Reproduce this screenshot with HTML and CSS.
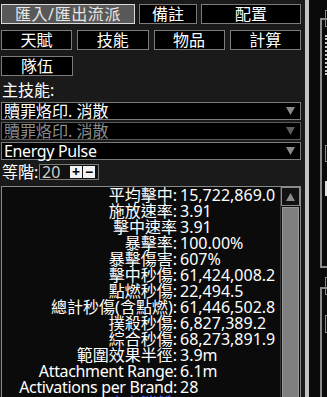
FILE: index.html
```html
<!DOCTYPE html>
<html lang="zh-Hant">
<head>
  <meta charset="UTF-8" />
  <meta name="viewport" content="width=device-width, initial-scale=1.0" />
  <title>Calc</title>
  <link rel="stylesheet" href="styles.css">
</head>
<body>
  <div class="layout">
    <div class="left-panel">
      <div class="tab-row">
        <button class="tab selected w-import">匯入/匯出流派</button>
        <button class="tab w-notes">備註</button>
        <button class="tab w-config">配置</button>
      </div>
      <div class="tab-row wide-gap">
        <button class="tab w-quarter">天賦</button>
        <button class="tab w-quarter">技能</button>
        <button class="tab w-quarter">物品</button>
        <button class="tab w-quarter">計算</button>
      </div>
      <div class="tab-row">
        <button class="tab w-quarter">隊伍</button>
      </div>

      <div class="field-label">主技能:</div>
      <div class="select">
        <span>贖罪烙印. 消散</span>
        <svg class="arrow" width="9" height="8" viewBox="0 0 9 8"><path d="M0 0H9L4.5 8Z" fill="#8a8a8a"/></svg>
      </div>
      <div class="select dim">
        <span>贖罪烙印. 消散</span>
        <svg class="arrow" width="9" height="8" viewBox="0 0 9 8"><path d="M0 0H9L4.5 8Z" fill="#5e5e5e"/></svg>
      </div>
      <div class="select">
        <span class="latin">Energy Pulse</span>
        <svg class="arrow" width="9" height="8" viewBox="0 0 9 8"><path d="M0 0H9L4.5 8Z" fill="#8a8a8a"/></svg>
      </div>

      <div class="level-row">
        <div class="level-label">等階:</div>
        <div class="level-box">
          <div class="level-value">20</div>
          <div class="step-btn">+</div>
          <div class="step-btn">−</div>
        </div>
      </div>

      <div class="stats-box">
        <div class="stats">
          <span class="k">平均擊中:</span><span class="v">15,722,869.0</span>
          <span class="k">施放速率:</span><span class="v">3.91</span>
          <span class="k">擊中速率</span><span class="v">3.91</span>
          <span class="k">暴擊率:</span><span class="v">100.00%</span>
          <span class="k">暴擊傷害:</span><span class="v">607%</span>
          <span class="k">擊中秒傷:</span><span class="v">61,424,008.2</span>
          <span class="k">點燃秒傷:</span><span class="v">22,494.5</span>
          <span class="k">總計秒傷(含點燃):</span><span class="v">61,446,502.8</span>
          <span class="k">撲殺秒傷:</span><span class="v">6,827,389.2</span>
          <span class="k">綜合秒傷:</span><span class="v">68,273,891.9</span>
          <span class="k">範圍效果半徑:</span><span class="v">3.9m</span>
          <span class="k latin">Attachment Range:</span><span class="v">6.1m</span>
          <span class="k latin">Activations per Brand:</span><span class="v">28</span>
          <span class="k blue">魔力消耗:</span><span class="v red">30</span>
        </div>
        <div class="scrollbar">
          <div class="scroll-up">
            <svg width="9" height="8" viewBox="0 0 9 8"><path d="M0 8H9L4.5 0Z" fill="#8a8a8a"/></svg>
          </div>
          <div class="scroll-thumb"></div>
        </div>
      </div>
    </div>

    <div class="divider"></div>

    <div class="right-panel">
      <div class="side-group first">
        <div class="side-box b1"></div>
        <div class="side-dots"></div>
        <div class="side-box b2"></div>
        <div class="side-box b3 filled"></div>
      </div>
      <div class="side-group second">
        <div class="side-box b4"></div>
        <div class="side-box b5"></div>
      </div>
    </div>
  </div>
</body>
</html>
```

FILE: styles.css
```css
html, body {
  margin: 0;
  padding: 0;
  width: 100vw;
  height: 100vh;
  overflow: hidden;
  background: #1a1a1a;
  color: #fff;
  font-family: "Noto Sans", "Noto Sans CJK TC", sans-serif;
  font-size: 16px;
}

.layout {
  display: flex;
  height: 100vh;
}

.left-panel {
  width: 305px;
  flex-shrink: 0;
  padding: 4px 4px 0 1px;
  box-sizing: border-box;
  display: flex;
  flex-direction: column;
}

.tab-row {
  display: flex;
  gap: 4px;
  margin-bottom: 6px;
}

.tab-row.wide-gap {
  gap: 5px;
}

.tab {
  height: 20px;
  padding: 0;
  margin: 0;
  background: #000;
  border: 1px solid #7c7c7c;
  color: #fff;
  font-family: inherit;
  font-size: 16px;
  line-height: 18px;
  text-align: center;
  cursor: pointer;
}

.tab.selected {
  background: #585858;
  border-color: #d8d8d8;
  color: #e6e6e6;
  letter-spacing: 0.6px;
}

.w-import { width: 134px; }
.w-notes { width: 58px; }
.w-config { width: 100px; }
.w-quarter { width: 72px; }

.field-label {
  height: 20px;
  line-height: 20px;
  margin-top: -2px;
  margin-bottom: 2px;
  padding-left: 1px;
}

.select {
  width: 300px;
  height: 18px;
  box-sizing: border-box;
  border: 1px solid #7c7c7c;
  background: #000;
  display: flex;
  align-items: center;
  justify-content: space-between;
  padding: 0 5px 0 2px;
  margin-bottom: 2px;
  line-height: 16px;
}

.select.dim {
  border-color: #5a5a5a;
  color: #8c8c8c;
}

.latin {
  letter-spacing: -0.35px;
}

.level-row {
  display: grid;
  grid-template-columns: 38px 60px;
  align-items: center;
  height: 20px;
  margin-bottom: 4px;
}

.level-label {
  padding-left: 1px;
  line-height: 20px;
}

.level-box {
  height: 16px;
  box-sizing: border-box;
  border: 1px solid #7c7c7c;
  background: #111;
  display: grid;
  grid-template-columns: 27px 12px 12px;
  column-gap: 1px;
  align-items: center;
  padding-left: 2px;
}

.level-value {
  color: #cfcfcf;
  line-height: 14px;
}

.step-btn {
  height: 12px;
  background: #f2f2f2;
  color: #000;
  font-weight: bold;
  font-size: 14px;
  line-height: 12px;
  text-align: center;
}

.stats-box {
  width: 300px;
  flex: 1;
  box-sizing: border-box;
  border: 1px solid #8a8a8a;
  border-bottom: none;
  background: #0b0b0b;
  display: flex;
  overflow: hidden;
}

.stats {
  flex: 1;
  display: grid;
  grid-template-columns: 174px 1fr;
  column-gap: 3px;
  align-content: start;
  line-height: 16px;
  padding-left: 1px;
  white-space: nowrap;
}

.stats .k {
  text-align: right;
}

.stats .blue { color: #4a4aff; }
.stats .red { color: #ff3b3b; }

.scrollbar {
  width: 19px;
  border-left: 1px solid #3a3a3a;
  display: flex;
  flex-direction: column;
}

.scroll-up {
  height: 17px;
  border: 1px solid #8a8a8a;
  background: #111;
  display: flex;
  align-items: center;
  justify-content: center;
}

.scroll-thumb {
  flex: 1;
  margin: 1px 1px 0 1px;
  border: 1px solid #9a9a9a;
  border-bottom: none;
  background: #7f7f7f;
}

.divider {
  width: 4px;
  flex-shrink: 0;
  background: #c4c4c4;
}

.right-panel {
  flex: 1;
  background: #0a0a0a;
  padding-left: 11px;
  overflow: hidden;
}

.side-group {
  border-left: 2px solid #8a8a8a;
  border-top: 2px solid #8a8a8a;
  border-bottom: 2px solid #8a8a8a;
  padding-left: 3px;
  box-sizing: border-box;
}

.side-group.first {
  margin-top: 18px;
  height: 250px;
}

.side-group.second {
  margin-top: 19px;
  height: 200px;
}

.side-box {
  width: 20px;
  border: 1px solid #8a8a8a;
  box-sizing: border-box;
}

.side-box.b1 { height: 17px; margin-top: -10px; }
.side-box.b2 { height: 17px; margin-top: 70px; }
.side-box.b3 { height: 15px; margin-top: 19px; }
.side-box.filled { background: #e0e0e0; border-color: #e0e0e0; }
.side-box.b4 { height: 18px; margin-top: -12px; }
.side-box.b5 { height: 18px; margin-top: 20px; }

.side-dots {
  height: 40px;
  margin-top: 8px;
  border-left: 2px dotted #cfcfcf;
}
```
